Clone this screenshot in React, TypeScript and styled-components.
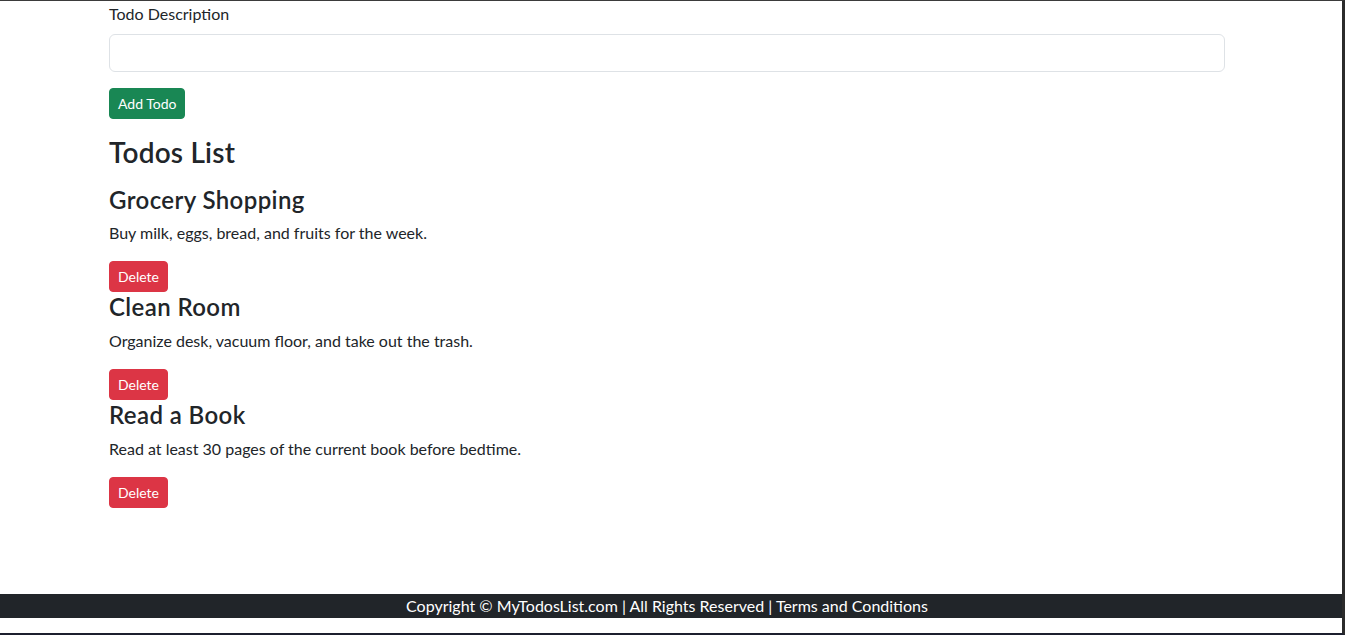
import React from "react";
import styled, { createGlobalStyle } from "styled-components";

const GlobalStyle = createGlobalStyle`
  *, *::before, *::after { box-sizing: border-box; }
  body {
    margin: 0;
    background: #fff;
    color: #212529;
    font-family: Lato, "Noto Sans", sans-serif;
    font-size: 16px;
    line-height: 1.5;
  }
`;

const Frame = styled.div`
  height: 635px;
  display: flex;
  flex-direction: column;
  border-top: 1px solid #3b3b3b;
  border-right: 3px solid #2b2b2b;
  border-bottom: 2px solid #1c1f2e;
  overflow: hidden;
`;

const Main = styled.main`
  flex: 1;
  padding: 1px 8px 0 0;
`;

const Container = styled.div`
  max-width: 1140px;
  margin: 0 auto;
  padding: 0 12px;
`;

const Field = styled.div`
  margin-bottom: 16px;
`;

const Label = styled.label`
  display: block;
  font-size: 16px;
  line-height: 24px;
  margin-bottom: 8px;
`;

const Input = styled.input`
  display: block;
  width: 100%;
  height: 38px;
  padding: 6px 12px;
  font: inherit;
  color: #212529;
  background: #fff;
  border: 1px solid #dee2e6;
  border-radius: 6px;
  outline: none;
`;

const Button = styled.button<{ $variant: "success" | "danger" }>`
  display: inline-block;
  height: 31px;
  padding: 4px 8px;
  font-family: inherit;
  font-size: 14px;
  line-height: 21px;
  color: #fff;
  background: ${(p) => (p.$variant === "success" ? "#198754" : "#dc3545")};
  border: 1px solid ${(p) => (p.$variant === "success" ? "#198754" : "#dc3545")};
  border-radius: 4px;
  cursor: pointer;
  vertical-align: top;
`;

const ListTitle = styled.h3`
  margin: 16px 0;
  padding-top: 1px;
  height: 33.6px;
  font-size: 28px;
  line-height: 33px;
  font-weight: 600;
  letter-spacing: 0.2px;
  box-sizing: border-box;
`;

const Item = styled.div`
  display: flex;
  flex-direction: column;
  align-items: flex-start;
`;

const ItemTitle = styled.h4`
  margin: 0 0 8px;
  padding-top: 1px;
  height: 28.8px;
  font-size: 24px;
  line-height: 28px;
  font-weight: 600;
  letter-spacing: 0.4px;
`;

const ItemDesc = styled.p`
  margin: 0 0 16px;
  font-size: 16px;
  line-height: 24px;
`;

const Footer = styled.footer`
  margin-bottom: 15px;
  padding-right: 8px;
  background: #212529;
  color: #fff;
  text-align: center;
  font-size: 16px;
  line-height: 24px;
`;

const todos = [
  { sno: 1, title: "Grocery Shopping", desc: "Buy milk, eggs, bread, and fruits for the week." },
  { sno: 2, title: "Clean Room", desc: "Organize desk, vacuum floor, and take out the trash." },
  { sno: 3, title: "Read a Book", desc: "Read at least 30 pages of the current book before bedtime." },
];

export default function App() {
  return (
    <Frame>
      <GlobalStyle />
      <Main>
        <Container>
          <form onSubmit={(e) => e.preventDefault()}>
            <Field>
              <Label htmlFor="desc">Todo Description</Label>
              <Input id="desc" type="text" />
            </Field>
            <Button type="submit" $variant="success">Add Todo</Button>
          </form>
          <ListTitle>Todos List</ListTitle>
          {todos.map((t) => (
            <Item key={t.sno}>
              <ItemTitle>{t.title}</ItemTitle>
              <ItemDesc>{t.desc}</ItemDesc>
              <Button type="button" $variant="danger">Delete</Button>
            </Item>
          ))}
        </Container>
      </Main>
      <Footer>Copyright © MyTodosList.com | All Rights Reserved | Terms and Conditions</Footer>
    </Frame>
  );
}
